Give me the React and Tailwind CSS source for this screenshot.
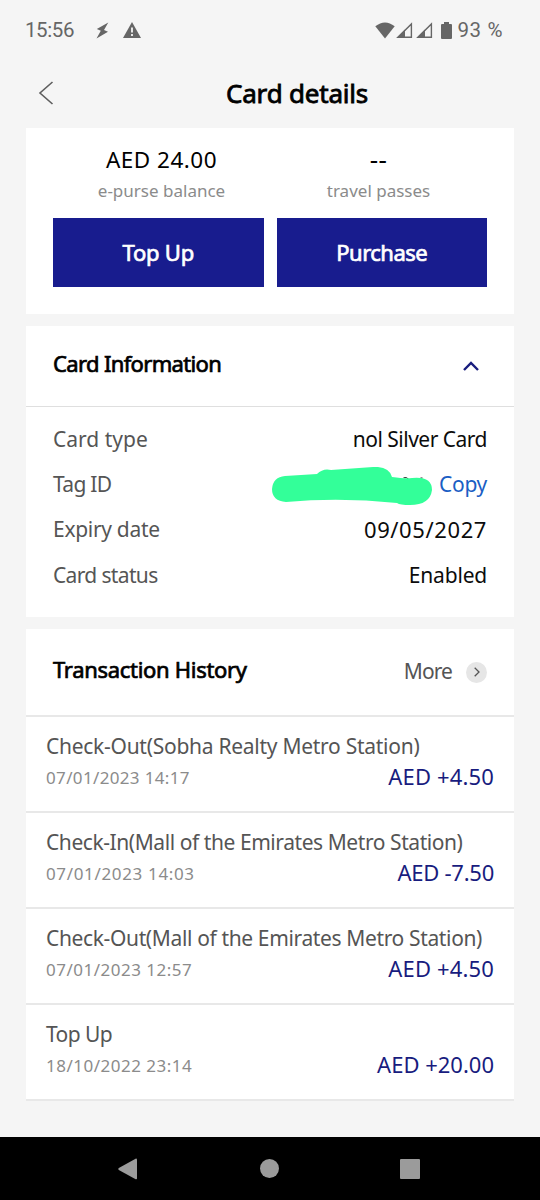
import React, { useState } from 'react';

const transactions = [
  {
    title: 'Check-Out(Sobha Realty Metro Station)',
    date: '07/01/2023 14:17',
    amount: 'AED +4.50',
    titleClass: 'tracking-[-0.27px]',
    dateClass: 'tracking-[0.35px]',
    amountClass: 'tracking-[0.15px]'
  },
  {
    title: 'Check-In(Mall of the Emirates Metro Station)',
    date: '07/01/2023 14:03',
    amount: 'AED -7.50',
    titleClass: 'tracking-[-0.43px]',
    dateClass: 'tracking-[0.65px]',
    amountClass: 'tracking-[-0.25px]'
  },
  {
    title: 'Check-Out(Mall of the Emirates Metro Station)',
    date: '07/01/2023 12:57',
    amount: 'AED +4.50',
    titleClass: 'tracking-[-0.36px]',
    dateClass: 'tracking-[0.5px]',
    amountClass: 'tracking-[0.15px]'
  },
  {
    title: 'Top Up',
    date: '18/10/2022 23:14',
    amount: 'AED +20.00',
    titleClass: 'tracking-[-0.6px]',
    dateClass: 'tracking-[0.5px]',
    amountClass: 'tracking-normal'
  }
];

function SignalIcon() {
  return (
    <svg width="17" height="17" viewBox="0 0 17 17" fill="none">
      <path d="M2 15.2L15.4 2v13.2z" stroke="#666" strokeWidth="1.4" />
      <path d="M0.5 16L9 7.5V16z" fill="#666" />
    </svg>
  );
}

function StatusBar() {
  return (
    <div className="flex h-[60px] items-center pl-[25px] pr-[37px] text-[#666]">
      <span className="font-[Roboto] text-[20.5px] tracking-[-0.4px]">15:56</span>
      <svg className="ml-[22px]" width="13" height="17" viewBox="0 0 13 17" fill="#666">
        <path d="M12.3 0.5L0.8 7l4 1.7L0.5 16.5 12 9.8 8 8z" />
      </svg>
      <svg className="ml-[14px]" width="18" height="16" viewBox="0 0 18 16">
        <path d="M9 0l9 16H0z" fill="#666" />
        <path d="M9 5.5v5M9 12v2" stroke="#f5f5f5" strokeWidth="1.8" />
      </svg>
      <svg className="ml-auto" width="20" height="17" viewBox="0 0 20 17" fill="#666">
        <path d="M0.3 4.3Q10-3.3 19.7 4.3L10 16.5z" />
      </svg>
      <span className="ml-px flex gap-[3px]">
        <SignalIcon />
        <SignalIcon />
      </span>
      <svg className="ml-[8px]" width="11" height="17" viewBox="0 0 11 17" fill="#666">
        <path d="M3 0h5v2h2q1 0 1 1v13q0 1-1 1H1q-1 0-1-1V3q0-1 1-1h2z" />
      </svg>
      <span className="ml-[5px] font-[Roboto] text-[20.5px] tracking-[0.6px]">93 %</span>
    </div>
  );
}

function InfoRow({ label, labelClass, valueClass, children }) {
  return (
    <div className="flex h-[45.3px] items-center justify-between text-[21px]">
      <span className={`text-[#555] ${labelClass}`}>{label}</span>
      <span className={`relative text-[#0c0c0c] ${valueClass}`}>{children}</span>
    </div>
  );
}

export default function App() {
  const [open, setOpen] = useState(true);

  return (
    <div className="flex h-[1200px] w-[540px] flex-col overflow-hidden whitespace-nowrap bg-[#f5f5f5] font-['Noto_Sans',sans-serif] text-black">
      <StatusBar />

      <header className="flex h-[68px] items-center pb-[2px] pl-[38px]">
        <button aria-label="Back">
          <svg width="16" height="24" viewBox="0 0 16 24" fill="none" stroke="#5e5e5e" strokeWidth="1.6">
            <path d="M14.5 1L2 12l12.5 11" />
          </svg>
        </button>
        <h1 className="ml-[172px] text-[26px] tracking-[-0.2px] [-webkit-text-stroke:0.8px]">Card details</h1>
      </header>

      <main className="flex flex-1 flex-col gap-3 px-[26px]">
        {/* Balance */}
        <section className="h-[186px] bg-white px-[27px] pt-[15px] text-center">
          <div className="grid h-[75px] grid-cols-2 content-start">
            <p className="text-[22.5px] leading-[33px] tracking-[0.5px]">AED 24.00</p>
            <p className="text-[26px] leading-[33px] tracking-[0.5px]">--</p>
            <p className="text-[17px] leading-[30px] text-[#8b8b8b]">e-purse balance</p>
            <p className="text-[17px] leading-[30px] text-[#8b8b8b]">travel passes</p>
          </div>
          <div className="grid grid-cols-2 gap-[13px] text-[22px] text-white">
            <button className="h-[69px] bg-[#181c8e] tracking-[-0.2px] [-webkit-text-stroke:0.7px]">Top Up</button>
            <button className="h-[69px] bg-[#181c8e] tracking-[-0.5px] [-webkit-text-stroke:0.7px]">Purchase</button>
          </div>
        </section>

        {/* Card information */}
        <section className="h-[291px] bg-white">
          <div className="flex h-[81px] items-center justify-between border-b border-[#dfdfdf] pl-[27px] pr-[35px]">
            <h2 className="pb-[5px] text-[22px] tracking-[-0.65px] [-webkit-text-stroke:0.7px]">Card Information</h2>
            <button aria-label="Toggle" onClick={() => setOpen(!open)}>
              <svg width="16" height="10" viewBox="0 0 16 10" fill="none" stroke="#181c7e" strokeWidth="2.4">
                <path d="M1 9l7-7 7 7" />
              </svg>
            </button>
          </div>
          {open && (
            <div className="px-[27px] pt-[10px]">
              <InfoRow label="Card type" valueClass="tracking-[-0.5px]">nol Silver Card</InfoRow>
              <InfoRow label="Tag ID" labelClass="tracking-[-0.7px]">
                <svg className="absolute right-[55px] top-[-2px]" width="160" height="39" viewBox="0 0 160 39">
                  <path d="M131.5 10.8q3-1 5 1.2M148.5 11h2" stroke="#222" strokeWidth="1" fill="none" />
                  <path d="M13 9L45 7Q51 1 59 3L101 0Q117-1 120 10Q134 12 140 11Q160 9 160 23Q158 38 138 38Q128 38 125 36Q68 30 14 35Q0 34 0 22Q1 10 13 9z" fill="#33ff99" />
                </svg>
                <button className="tracking-[-0.3px] text-[#1a5ec4]">Copy</button>
              </InfoRow>
              <InfoRow label="Expiry date" labelClass="tracking-[-0.3px]" valueClass="pb-[2px] text-[22px] tracking-[0.6px]">
                09/05/2027
              </InfoRow>
              <InfoRow label="Card status" labelClass="tracking-[-0.65px]" valueClass="tracking-[-0.2px]">
                Enabled
              </InfoRow>
            </div>
          )}
        </section>

        {/* Transaction history */}
        <section>
          <div className="flex h-[88px] items-center justify-between border-b-2 border-[#e8e8e8] bg-white px-[27px]">
            <h2 className="pb-[5px] text-[22px] tracking-[-0.3px] [-webkit-text-stroke:0.7px]">Transaction History</h2>
            <button className="flex items-center gap-[14px] text-[21px] tracking-[-0.9px] text-[#555]">
              More
              <span className="flex size-[21px] items-center justify-center rounded-full bg-[#e6e6e6]">
                <svg width="6" height="10" viewBox="0 0 6 10" fill="none" stroke="#555" strokeWidth="1.3">
                  <path d="M0.7 0.8L5 5 0.7 9.2" />
                </svg>
              </span>
            </button>
          </div>
          {transactions.map((tx) => (
            <div key={tx.date} className="h-24 border-b-2 border-[#e8e8e8] bg-white px-5 pt-[13px]">
              <p className={`text-[21px] leading-8 text-[#555] ${tx.titleClass}`}>{tx.title}</p>
              <div className="flex justify-between leading-8">
                <span className={`text-[17px] text-[#8b8b8b] ${tx.dateClass}`}>{tx.date}</span>
                <span className={`text-[22px] leading-7 text-[#181c7e] ${tx.amountClass}`}>{tx.amount}</span>
              </div>
            </div>
          ))}
        </section>
      </main>

      <nav className="flex h-[63px] items-center bg-black pl-[118px]">
        <svg width="19" height="22" viewBox="0 0 19 22" fill="#9b9b9b">
          <path d="M18 0.5q1 0 1 1v19q0 1-1.3 0.7L0.8 12q-1-1 0-2z" />
        </svg>
        <span className="ml-[123px] size-[19px] rounded-full bg-[#9b9b9b]" />
        <span className="ml-[121px] size-5 rounded-[1px] bg-[#9b9b9b]" />
      </nav>
    </div>
  );
}
